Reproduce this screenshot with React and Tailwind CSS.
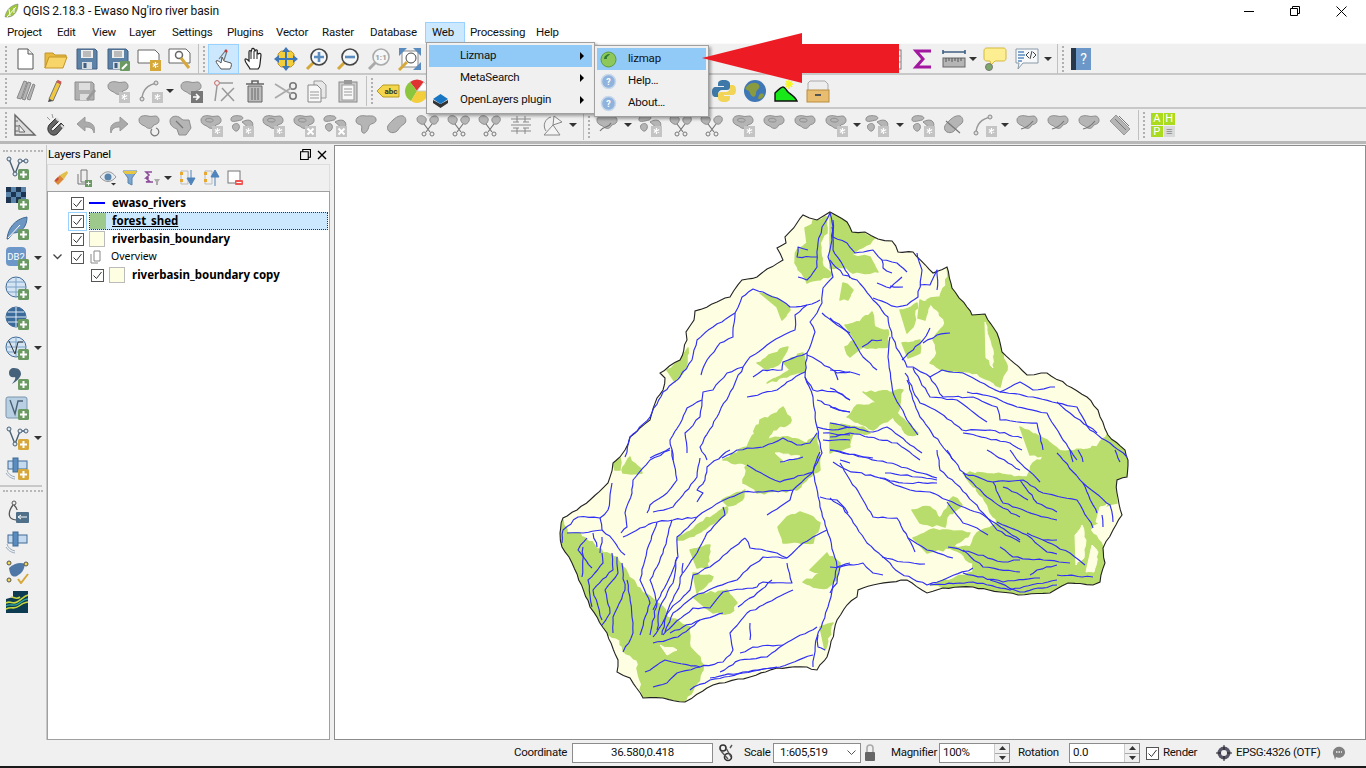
// deterministic wobble so the hand-read map lines don't look like straight segments
const wiggle = (pts, amp = 0.9, step = 5) => {
  const out = [];
  for (let i = 0; i < pts.length - 1; i++) {
    const [x1, y1] = pts[i];
    const [x2, y2] = pts[i + 1];
    const n = Math.max(1, Math.round(Math.hypot(x2 - x1, y2 - y1) / step));
    for (let k = 0; k < n; k++) {
      const t = k / n;
      const a = k === 0 ? 0 : Math.sin((x1 + k) * 12.9898 + (y2 + k) * 78.233) * 43758.5453;
      const b = k === 0 ? 0 : Math.sin((y1 + k) * 39.346 + (x2 - k) * 11.135) * 24634.6345;
      const ox = k === 0 ? 0 : ((a - Math.floor(a)) - 0.5) * 2 * amp;
      const oy = k === 0 ? 0 : ((b - Math.floor(b)) - 0.5) * 2 * amp;
      out.push(`${(x1 + (x2 - x1) * t + ox).toFixed(1)},${(y1 + (y2 - y1) * t + oy).toFixed(1)}`);
    }
  }
  out.push(pts[pts.length - 1].join(","));
  return out.join(" ");
};

const boundary = [[830,212],[847,222],[852,232],[865,232],[878,239],[892,241],[898,252],[913,252],[933,273],[947,267],[952,288],[967,307],[972,315],[985,314],[997,333],[1002,352],[1027,375],[1047,373],[1087,397],[1098,410],[1108,435],[1125,450],[1128,460],[1127,477],[1117,480],[1117,493],[1122,515],[1113,530],[1103,548],[1105,563],[1100,582],[1093,585],[1068,583],[1050,593],[1018,595],[1000,592],[973,587],[943,588],[927,593],[907,580],[873,585],[858,590],[857,597],[847,605],[837,620],[830,647],[827,657],[817,670],[807,667],[777,668],[750,677],[713,685],[685,702],[663,698],[643,698],[630,678],[617,672],[618,660],[607,633],[590,607],[572,563],[562,547],[560,533],[563,518],[577,510],[590,500],[608,483],[613,463],[620,457],[625,450],[630,437],[650,420],[657,398],[663,390],[665,378],[660,373],[680,360],[687,340],[686,332],[694,320],[695,311],[717,302],[725,298],[730,297],[742,280],[757,277],[767,269],[783,260],[777,248],[786,243],[785,237],[797,223],[803,215],[817,220]];

const greens = [
  [[805,228],[817,220],[828,217],[827,233],[820,243],[822,263],[832,275],[817,280],[807,283],[795,263],[797,250],[807,243]],
  [[830,210],[847,220],[852,231],[875,238],[850,257],[870,257],[878,272],[853,273],[847,268],[830,268]],
  [[843,283],[853,290],[848,300],[840,300]],
  [[947,265],[954,288],[969,307],[972,313],[985,312],[999,333],[1007,370],[1000,387],[977,373],[943,370],[930,363],[937,353],[933,340],[945,323],[937,310],[927,300],[940,297],[948,277]],
  [[845,325],[860,322],[872,312],[875,327],[888,330],[888,347],[863,347],[850,357],[845,347],[855,340]],
  [[900,310],[917,303],[913,327],[907,333]],
  [[920,300],[930,302],[925,320],[918,318]],
  [[902,343],[920,340],[920,353],[908,358]],
  [[863,392],[893,392],[903,390],[897,413],[918,433],[908,435],[893,417],[873,430],[847,417],[857,405],[877,403]],
  [[830,423],[863,427],[870,433],[853,433],[850,447],[830,453]],
  [[760,293],[780,300],[790,310],[782,320],[777,307]],
  [[667,370],[680,358],[688,348],[687,363],[683,373],[675,382]],
  [[757,363],[783,348],[788,347],[780,363],[767,370]],
  [[783,362],[803,353],[805,372],[783,377],[767,383],[790,370]],
  [[750,440],[760,420],[777,413],[783,407],[790,417],[790,423],[773,430],[767,440],[783,437],[807,443],[817,433],[820,470],[813,473],[797,490],[757,493],[743,483],[747,465],[723,460],[747,447]],
  [[787,517],[800,512],[813,517],[820,523],[813,543],[783,543],[778,527]],
  [[827,553],[840,563],[837,580],[827,588],[813,587],[803,582],[823,573],[810,570]],
  [[820,627],[833,623],[825,650]],
  [[690,550],[710,545],[708,567],[697,568]],
  [[693,573],[713,577],[697,593]],
  [[693,597],[727,590],[737,603],[730,613],[713,613],[700,603]],
  [[677,540],[700,523],[717,513],[727,507],[727,513],[703,530],[683,540]],
  [[722,500],[745,490],[742,500],[728,506]],
  [[563,520],[567,533],[580,533],[603,553],[617,557],[637,587],[663,607],[667,617],[690,627],[690,647],[700,657],[703,670],[697,683],[683,704],[663,700],[643,700],[640,680],[637,660],[623,650],[620,640],[605,635],[588,607],[570,567],[558,547]],
  [[622,470],[630,457],[642,473],[623,473]],
  [[613,463],[620,458],[620,470],[615,470]],
  [[963,473],[983,473],[1027,477],[1033,463],[1057,450],[1125,450],[1130,460],[1129,479],[1117,482],[1117,503],[1103,507],[1097,523],[1090,530],[1103,547],[1107,563],[1102,584],[1093,587],[1068,585],[1050,595],[1017,597],[1000,594],[973,589],[930,585],[940,582],[973,572],[973,563],[950,548],[970,547],[977,533],[997,523],[983,497],[970,483]],
  [[1020,427],[1047,440],[1063,453],[1097,447],[1108,433],[1127,450],[1130,460],[1057,460],[1030,455]],
  [[912,510],[930,507],[940,518],[953,497],[962,505],[947,517],[945,527],[920,523]],
  [[913,538],[930,530],[947,530],[970,533],[953,547],[927,553]],
];

const creamHoles = [
  [[985,322],[993,350],[993,368],[986,358]],
  [[1075,535],[1082,525],[1086,540],[1084,558],[1076,565]],
  [[1092,545],[1098,552],[1094,572],[1086,572]],
  [[1100,507],[1108,503],[1102,522],[1096,522]],
  [[775,453],[800,456],[785,462]],
  [[660,645],[677,650],[667,655]],
];

const rivers = [
  [[830,213],[833,227],[832,240],[828,257],[833,277],[823,288],[822,303],[817,313],[810,322],[815,332],[807,353],[805,377],[813,397],[817,427],[822,453],[813,472],[820,507],[827,530],[837,567],[828,607],[817,637],[813,667]],
  [[830,213],[822,227],[818,243],[817,267],[807,280],[798,277]],
  [[817,257],[797,257],[798,247],[808,250]],
  [[807,305],[790,307],[777,298],[763,292],[753,289],[742,297],[735,313],[713,327],[697,340],[692,360],[680,377],[663,392],[650,417],[630,437],[625,457]],
  [[735,313],[733,337],[720,343],[707,360],[701,375]],
  [[820,300],[807,305],[795,315],[795,330],[780,337],[767,345],[750,357],[743,367],[727,373],[713,390],[703,392],[702,400],[687,408],[682,420],[670,440],[673,460]],
  [[743,367],[735,383],[717,417],[700,447],[707,460]],
  [[702,400],[700,417],[685,433],[687,453]],
  [[807,353],[783,362],[782,370],[763,370],[753,377]],
  [[805,372],[787,382],[777,390],[747,397]],
  [[807,355],[817,360],[837,373],[850,372]],
  [[835,372],[838,380]],
  [[822,313],[837,325],[850,333]],
  [[805,377],[813,390],[837,392],[850,400]],
  [[817,400],[833,408],[850,412]],
  [[722,458],[737,450],[763,447],[783,438],[797,445],[810,443],[817,433]],
  [[650,458],[670,448]],
  [[817,427],[833,430],[850,427]],
  [[823,433],[850,435]],
  [[823,440],[850,440]],
  [[830,260],[843,275],[857,280],[873,300],[888,317],[892,337],[902,357]],
  [[833,220],[833,250],[850,278]],
  [[832,227],[833,237],[847,243],[855,253],[873,250],[882,260],[897,263],[907,272]],
  [[882,260],[883,268],[892,273]],
  [[917,253],[922,270],[918,297],[907,305],[897,307],[873,298]],
  [[920,285],[930,285],[937,270],[937,290]],
  [[902,277],[890,288],[877,283]],
  [[890,286],[903,287]],
  [[830,318],[843,328],[853,340],[863,357],[877,370]],
  [[862,347],[872,340],[882,340]],
  [[890,337],[888,357],[893,393],[907,420],[918,435]],
  [[902,357],[907,367],[913,367],[930,377],[942,370],[963,373],[980,382],[1000,392],[1020,382],[1033,390],[1055,387]],
  [[902,360],[923,340],[930,328]],
  [[923,343],[937,335],[950,333]],
  [[913,368],[930,397],[957,400],[987,422]],
  [[905,373],[920,403],[940,413],[962,430],[990,430],[1022,438]],
  [[930,377],[943,397],[973,397],[997,407],[1000,420],[1037,423],[1043,450]],
  [[907,380],[920,417],[940,443],[953,460]],
  [[967,392],[993,397],[1017,407],[1047,413],[1063,440],[1077,460]],
  [[1000,392],[1033,397],[1057,403],[1077,407],[1090,430],[1110,443],[1127,457]],
  [[963,433],[1010,443],[1022,450]],
  [[830,370],[850,372],[860,375]],
  [[830,388],[850,400]],
  [[830,407],[850,412]],
  [[830,423],[873,432],[887,427],[922,453]],
  [[830,437],[850,433],[897,443],[920,460]],
  [[830,450],[873,458]],
  [[1057,402],[1070,413],[1080,420],[1097,433]],
  [[830,450],[863,457],[897,465],[937,478]],
  [[833,462],[847,470],[880,478],[910,490],[930,492],[947,500],[970,510],[980,513],[1020,540]],
  [[880,478],[903,483],[937,483]],
  [[885,473],[917,477],[937,480]],
  [[840,463],[850,480],[863,500],[873,517],[897,518],[908,538],[927,550],[953,558]],
  [[830,498],[843,507],[867,543],[883,557],[900,573],[927,585],[943,580],[973,568]],
  [[882,557],[903,562],[925,564]],
  [[908,538],[915,552]],
  [[937,450],[940,470],[960,487],[983,513],[997,530],[1020,542]],
  [[947,450],[960,470],[973,483],[987,497],[1003,508],[1020,517]],
  [[963,473],[993,482],[1023,480],[1043,493],[1077,500],[1093,528]],
  [[993,482],[1003,503],[1037,515],[1057,520]],
  [[1003,487],[1017,493],[1028,500]],
  [[1020,480],[1037,503],[1057,512]],
  [[1057,453],[1083,483],[1097,513]],
  [[1083,483],[1110,505],[1113,522]],
  [[1102,515],[1103,527]],
  [[997,522],[1027,535],[1047,552],[1057,554]],
  [[1027,533],[1043,540],[1057,540]],
  [[1043,540],[1070,553],[1085,565]],
  [[1000,547],[1013,557],[1070,563]],
  [[947,502],[963,523],[977,528],[988,535]],
  [[948,547],[973,553],[1003,562],[1020,560]],
  [[963,550],[983,567],[1020,572]],
  [[963,573],[1003,582],[1040,578]],
  [[1057,565],[1037,570],[1030,575]],
  [[1057,575],[1093,577]],
  [[930,585],[973,582],[1010,590],[1057,580]],
  [[990,580],[1020,592],[1057,585]],
  [[1070,450],[1073,462]],
  [[1078,450],[1083,462]],
  [[1115,450],[1120,462]],
  [[987,450],[1020,470]],
  [[1010,450],[1017,460],[1040,482]],
  [[820,452],[813,472],[793,490],[763,492],[743,492],[720,502],[707,510],[697,517],[673,520],[657,522],[640,528],[623,537]],
  [[747,465],[770,478],[780,482],[813,472]],
  [[793,490],[790,500],[767,515]],
  [[803,457],[780,462]],
  [[730,450],[707,467],[705,480],[697,490],[703,493],[697,502]],
  [[700,458],[697,477],[673,507],[653,512]],
  [[672,450],[677,480],[667,493],[650,505],[647,513]],
  [[670,450],[650,460],[633,480],[632,493],[625,513],[627,527],[621,533]],
  [[612,483],[608,510],[600,518],[578,517],[563,530],[562,543]],
  [[600,518],[602,530],[583,533],[567,533]],
  [[602,530],[613,540],[625,555]],
  [[602,537],[600,553]],
  [[593,533],[597,547]],
  [[587,538],[578,550],[592,568]],
  [[583,547],[582,577]],
  [[602,553],[603,563],[588,580],[592,607]],
  [[612,553],[613,570],[593,590],[602,620]],
  [[617,557],[618,573],[605,590],[610,613],[602,625]],
  [[622,563],[625,590],[613,617],[613,633]],
  [[627,580],[632,617],[633,633],[623,652]],
  [[657,522],[647,550],[640,580],[650,603],[640,635]],
  [[672,520],[663,553],[650,580],[657,603],[650,635]],
  [[697,517],[677,537],[678,557],[667,583],[653,610]],
  [[677,557],[673,583],[660,607],[657,630]],
  [[683,563],[680,583],[667,613],[662,635]],
  [[723,507],[725,515],[707,533],[697,553],[683,573]],
  [[745,538],[727,553],[710,567],[693,575],[690,590],[670,610],[653,637]],
  [[745,538],[750,548],[777,553],[787,558]],
  [[787,558],[763,557],[747,570],[737,580],[713,588],[693,597],[673,613],[665,632]],
  [[787,563],[792,583],[763,582],[757,587],[723,592],[710,608],[693,608],[673,625],[663,635]],
  [[827,530],[803,543],[787,558]],
  [[772,580],[757,593],[738,607]],
  [[793,590],[763,605],[747,613],[730,633],[733,650],[723,662],[700,667],[677,663],[665,660],[645,672]],
  [[700,667],[677,673],[667,683],[653,687]],
  [[723,613],[700,620],[683,627],[670,633]],
  [[700,620],[690,628],[678,637],[653,643]],
  [[817,627],[783,645],[753,647],[740,653]],
  [[750,623],[750,640]],
  [[783,645],[767,657],[740,660],[720,672]],
  [[813,655],[780,667],[743,672],[710,678]],
  [[777,667],[743,673],[710,680],[690,690]],
  [[818,635],[818,647],[825,650]],
  [[837,567],[850,563]],
  [[820,497],[837,500],[848,513]],
  [[840,460],[850,463]],
  [[830,567],[840,567],[863,563],[873,573],[883,575]],
  [[840,567],[837,583],[830,593]],
];

const boundaryPts = wiggle(boundary, 0.8, 6);

const RiverMap = () => (
  <svg viewBox="335 146 1030 593" className="block w-full h-full">
    <defs>
      <clipPath id="basin">
        <polygon points={boundaryPts} />
      </clipPath>
    </defs>
    <polygon points={boundaryPts} fill="#fefee2" />
    <g clipPath="url(#basin)">
      {greens.map((g, i) => (
        <polygon key={i} points={wiggle(g, 1.4, 4)} fill="#b9dd6c" stroke="#b9dd6c" strokeWidth="1.5" strokeLinejoin="round" />
      ))}
      {creamHoles.map((g, i) => (
        <polygon key={i} points={wiggle(g, 1.2, 4)} fill="#fefee2" stroke="#fefee2" strokeLinejoin="round" />
      ))}
    </g>
    <polygon points={boundaryPts} fill="none" stroke="#222" strokeWidth="1.1" />
    {rivers.map((r, i) => (
      <polyline key={i} points={wiggle(r, 0.8, 5)} fill="none" stroke="#2f2ff5" strokeWidth="1.15" strokeLinejoin="round" />
    ))}
  </svg>
);

const Sv = ({ s = 24, children }) => (
  <svg width={s} height={s} viewBox="0 0 24 24" className="block">
    {children}
  </svg>
);

const Arrow = () => <span className="w-0 h-0 shrink-0 border-l-[4px] border-r-[4px] border-t-[4px] border-l-transparent border-r-transparent border-t-[#333]" />;

const Gap = ({ w }) => <div className={`${w} shrink-0`} />;

const Badge = ({ c = "#c4c4c4" }) => (
  <>
    <rect x="13" y="13" width="11" height="11" fill={c} />
    <path d="M18.5 15v6M15.8 16.500l5.400 3M21.200 16.500l-5.400 3" stroke="#fff" strokeWidth="1.2" />
  </>
);

const Plus = ({ c = "#6a9a62", x = 13, y = 13 }) => (
  <>
    <rect x={x} y={y} width="11" height="11" rx="1.5" fill={c} />
    <path d={`M${x + 5.5} ${y + 2}v7M${x + 2} ${y + 5.5}h7`} stroke="#fff" strokeWidth="2" />
  </>
);

const blobD = "M2 7c0-4 5-5 9-4 3 1 5 0 8 0 3 1 4 5 2 7-2 2-4 1-5 3-1 3-5 3-7 1-2-2-7-2-7-7z";

const Blob = ({ badge, d = blobD, lines }) => (
  <Sv>
    <path d={d} fill="#b5b5b5" stroke="#8e8e8e" />
    {lines && <path d={lines} fill="none" stroke="#777" strokeWidth="1.2" />}
    {badge === "gear" && <Badge />}
    {badge === "x" && (
      <>
        <rect x="13" y="13" width="11" height="11" fill="#c4c4c4" />
        <path d="M15.500 15.500l6 6M21.500 15.500l-6 6" stroke="#fff" strokeWidth="2" />
      </>
    )}
  </Sv>
);

const Scissor = () => (
  <Sv>
    <path d="M1 6c0-3 4-4 6-3s4 2 3 5c-1 3-3 4-5 3S1 9 1 6zM14 8c-1-3 2-5 5-5s4 3 3 5-3 4-5 3-2-1-3-3z" fill="#b5b5b5" stroke="#8e8e8e" />
    <path d="M8 11l6 8M16 11l-6 8" stroke="#777" strokeWidth="1.2" />
    <circle cx="8" cy="21" r="2" fill="none" stroke="#777" />
    <circle cx="16" cy="21" r="2" fill="none" stroke="#777" />
  </Sv>
);

const NewFile = () => (
  <Sv><path d="M5 2h10l5 5v15H5z" fill="#fff" stroke="#555" /><path d="M15 2v5h5" fill="#eee" stroke="#555" /></Sv>
);
const Folder = () => (
  <Sv><path d="M1 6h8l2 2h11v3H5L1 21z" fill="#e8b93f" stroke="#c4962a" /><path d="M5 10h18l-4 11H1z" fill="#f7d568" stroke="#c4962a" /></Sv>
);
const Floppy = ({ edit }) => (
  <Sv>
    <path d="M2 2h18l2 2v18H2z" fill="#5d82a8" stroke="#3f5f80" />
    <rect x="6" y="3" width="12" height="8" fill="#eee" />
    <path d="M8 5h8M8 7h8M8 9h8" stroke="#888" />
    <rect x="7" y="15" width="10" height="7" fill="#d8dde2" />
    <rect x="8.5" y="16" width="3" height="5" fill="#3f5f80" />
    {edit && <><rect x="14" y="14" width="10" height="10" rx="1" fill="#6a9a62" /><path d="M16 22l5-5" stroke="#fff" strokeWidth="2" /></>}
  </Sv>
);
const NewTpl = () => (
  <Sv>
    <path d="M1 3h17l4 4v9H1z" fill="#fff" stroke="#666" />
    <rect x="13" y="13" width="11" height="11" fill="#d6a83a" />
    <path d="M18.500 15v6M15.800 16.500l5.400 3M21.200 16.500l-5.400 3" stroke="#fff" strokeWidth="1.2" />
  </Sv>
);
const Manager = () => (
  <Sv>
    <path d="M1 2h17l4 4v10H1z" fill="#fff" stroke="#666" />
    <circle cx="11" cy="8" r="3.500" fill="none" stroke="#666" strokeWidth="1.5" />
    <path d="M13 11l8 10" stroke="#d6a83a" strokeWidth="3" />
  </Sv>
);
const Touch = () => (
  <Sv>
    <path d="M9 22c-2-3-5-6-5-8 1-1 3 0 5 2l1-6 2 4 7 2c1 2 0 4-1 6z" fill="#fff" stroke="#555" />
    <path d="M7 12l7-9M15 4l-3 9" stroke="#777" strokeWidth="1.2" />
    <circle cx="14" cy="4" r="1.400" fill="#c33" />
  </Sv>
);
const Hand = () => (
  <Sv>
    <path d="M7 22c-1-3-5-6-5-9 0-2 2-1 4 1V5c0-2 2-2 2 0l1-3c0-1 2-1 2 0l1 2c1-2 3-1 2 1l1 2c1-1 3-1 3 1l-1 9c0 2-1 4-2 5z" fill="#fff" stroke="#222" strokeWidth="1.2" />
    <path d="M8 5v7M11 4v8M14 6v6" stroke="#222" />
  </Sv>
);
const Pan = () => (
  <Sv>
    <path d="M4 7l3-3h10l3 3v10l-3 3H7l-3-3z" fill="#f2cd3c" stroke="#c4962a" />
    <path d="M12 0l4 5H8zM12 24l-4-5h8zM0 12l5-4v8zM24 12l-5 4V8z" fill="#3f76b5" />
    <path d="M12 5v14M5 12h14" stroke="#3f76b5" strokeWidth="2" />
  </Sv>
);
const Mag = ({ sym, grey }) => (
  <Sv>
    <path d="M2 22l7-7" stroke={grey ? "#aaa" : "#d6a83a"} strokeWidth="3" />
    <circle cx="14" cy="10" r="8" fill="#f4f6f8" stroke={grey ? "#aaa" : "#444"} strokeWidth="1.6" />
    {sym === "+" && <path d="M14 5v10M9 10h10" stroke="#5b8cc0" strokeWidth="2.6" />}
    {sym === "-" && <path d="M9 10h10" stroke="#5b8cc0" strokeWidth="2.6" />}
    {sym === "1" && <text x="14" y="13" textAnchor="middle" fontSize="8" fontWeight="700" fill="#999">1:1</text>}
  </Sv>
);
const ZoomFull = () => (
  <Sv>
    <rect x="4" y="4" width="16" height="16" fill="#fff" stroke="#888" />
    <path d="M1 1h8L1 9zM23 1h-8l8 8z" fill="#5b8cc0" />
    <path d="M23 23h-8l8-8z" fill="#5b8cc0" />
    <path d="M1 23l8-8" stroke="#d6a83a" strokeWidth="3" />
    <circle cx="13" cy="11" r="5" fill="#fff" stroke="#444" />
  </Sv>
);
const TableEnd = () => (
  <Sv><rect x="2" y="3" width="18" height="19" fill="#fff" stroke="#777" /><path d="M14 3v19M8 3v19M2 9h18M2 15h18" stroke="#999" /></Sv>
);
const Sigma = () => (
  <Sv><path d="M20 4H5l7 8-7 8h15" fill="none" stroke="#a2189f" strokeWidth="3" /></Sv>
);
const Ruler = () => (
  <Sv>
    <path d="M1 5h22M1 3v4M23 3v4" stroke="#3f5f80" strokeWidth="1.6" />
    <rect x="1" y="11" width="22" height="9" fill="#b5b5b5" stroke="#666" />
    <path d="M4 11v4M7 11v3M10 11v4M13 11v3M16 11v4M19 11v3" stroke="#555" />
  </Sv>
);
const Tip = () => (
  <Sv>
    <path d="M4 1h16c3 0 3 2 3 3v7c0 3-2 3-3 3H12l-4 4-1-4H4c-2 0-3-1-3-3V4c0-2 1-3 3-3z" fill="#fdee92" stroke="#d6b93a" />
    <circle cx="6" cy="20" r="3.500" fill="#7ba86a" stroke="#777" />
  </Sv>
);
const DocTip = () => (
  <Sv>
    <path d="M1 2h22v14H8l-5 6 1-6H1z" fill="#f6f8fa" stroke="#8a9aa8" />
    <path d="M3 5h6M3 8h7M3 11h6M3 14h4" stroke="#5b8cc0" strokeWidth="1.4" />
    <path d="M14 5l-3 3 3 3M18 5l3 3-3 3M17 4l-2 8" fill="none" stroke="#444" />
  </Sv>
);
const HelpBook = () => (
  <Sv>
    <rect x="2" y="1" width="20" height="22" fill="#6b98c8" />
    <rect x="2" y="1" width="5" height="22" fill="#26384a" />
    <text x="14.500" y="17" textAnchor="middle" fontSize="14" fill="#fff">?</text>
  </Sv>
);
const Pencils = () => (
  <Sv>
    <path d="M2 19L9 2l3 1-6 17zM7 20L13 3l3 1-6 17zM12 20l6-15 2 1-5 15z" fill="#b5b5b5" stroke="#888" />
  </Sv>
);
const Pencil = () => (
  <Sv>
    <path d="M5 20L13 2l4 2-8 18z" fill="#f0c840" stroke="#777" />
    <path d="M5 20l-1 3 5-1" fill="#444" />
    <path d="M13 2l4 2" stroke="#c55" strokeWidth="3" />
  </Sv>
);
const SaveEdit = () => (
  <Sv>
    <path d="M2 3h17l2 2v16H2z" fill="#b0b0b0" stroke="#8e8e8e" />
    <rect x="6" y="4" width="11" height="7" fill="#ddd" />
    <rect x="7" y="15" width="9" height="6" fill="#ddd" />
    <path d="M13 20l8-10 2 2-8 10z" fill="#9a9a9a" />
  </Sv>
);
const Nodes = ({ badge }) => (
  <Sv>
    <path d="M3 21c0-8 4-15 15-17" fill="none" stroke="#999" strokeWidth="1.4" />
    <circle cx="3" cy="20" r="2" fill="#ddd" stroke="#888" />
    <circle cx="17" cy="4" r="2" fill="#ddd" stroke="#888" />
    {badge && <Badge />}
  </Sv>
);
const BlobArrow = () => (
  <Sv>
    <path d={blobD} fill="#b5b5b5" stroke="#8e8e8e" />
    <rect x="12" y="12" width="12" height="12" fill="#777" />
    <path d="M14 18h5M17 15l3 3-3 3" stroke="#fff" strokeWidth="1.6" fill="none" />
  </Sv>
);
const Tools = () => (
  <Sv>
    <circle cx="5" cy="4" r="2.400" fill="none" stroke="#b66" />
    <path d="M7 4h14M5 7L3 22M22 9L9 22M10 9l12 13" stroke="#999" strokeWidth="1.5" />
  </Sv>
);
const Trash = () => (
  <Sv>
    <path d="M3 5h18M9 5V2h6v3" stroke="#666" strokeWidth="1.6" fill="none" />
    <path d="M5 7h14v16H5z" fill="#bbb" stroke="#666" />
    <path d="M9 9v12M12 9v12M15 9v12" stroke="#666" />
  </Sv>
);
const Cut = () => (
  <Sv>
    <circle cx="19" cy="7" r="3.200" fill="none" stroke="#777" strokeWidth="1.6" />
    <circle cx="19" cy="17" r="3.200" fill="none" stroke="#777" strokeWidth="1.6" />
    <path d="M1 5l16 10M1 19l16-10" stroke="#aaa" strokeWidth="1.8" />
  </Sv>
);
const Copy = () => (
  <Sv>
    <path d="M9 2h8l4 4v13H9z" fill="#e8e8e8" stroke="#999" />
    <path d="M3 6h9l4 4v13H3z" fill="#f8f8f8" stroke="#888" />
    <path d="M5 13h9M5 16h9M5 19h9" stroke="#999" />
  </Sv>
);
const Paste = () => (
  <Sv>
    <rect x="3" y="3" width="18" height="20" fill="#ccc" stroke="#888" />
    <rect x="6" y="6" width="12" height="15" fill="#f8f8f8" stroke="#999" />
    <rect x="8" y="1" width="8" height="4" fill="#999" />
    <path d="M8 10h8M8 13h8M8 16h8" stroke="#999" />
  </Sv>
);
const Abc = () => (
  <Sv>
    <path d="M7 6h16v12H7l-6-6z" fill="#f3d64b" stroke="#b79a20" />
    <text x="15" y="15" textAnchor="middle" fontSize="8" fontWeight="700" fill="#333">abc</text>
  </Sv>
);
const Pie = () => (
  <Sv>
    <path d="M12 12L5 3a11 11 0 0 1 14 0z" fill="#e03232" />
    <path d="M12 12L5 3a11 11 0 0 0 1 19z" fill="#8cc63e" />
    <path d="M12 12l-6 10a11 11 0 0 0 17-10z" fill="#f2cd3c" />
    <path d="M12 12l7-9a11 11 0 0 1 4 9z" fill="#fff" stroke="#ccc" />
  </Sv>
);
const Python = () => (
  <Sv>
    <path d="M12 1c-5 0-6 2-6 4v2h6v1H4c-3 0-4 2-4 5s1 5 4 5h2v-3c0-2 2-4 4-4h5c2 0 3-1 3-3V5c0-2-2-4-6-4z" fill="#3d78a8" />
    <path d="M12 23c5 0 6-2 6-4v-2h-6v-1h8c3 0 4-2 4-5s-1-5-4-5h-2v3c0 2-2 4-4 4H9c-2 0-3 1-3 3v3c0 2 2 4 6 4z" fill="#f2d557" />
  </Sv>
);
const Globe = () => (
  <Sv>
    <circle cx="12" cy="12" r="11" fill="#3f76b5" />
    <path d="M5 6c4-3 9-3 11 0 2 4-3 4-3 8s-3 5-5 2-1-4-4-5-1-3 1-5zM17 15c2-1 4 0 4 1-1 3-3 4-5 4s0-4 1-5z" fill="#8a9a3e" />
  </Sv>
);
const GreenHill = () => (
  <Sv>
    <path d="M1 22V14c3-3 6-6 8-6s3 3 5 5 7 4 9 9z" fill="#18e818" stroke="#111" strokeWidth="1.4" />
    <path d="M15 1v9M11 5l8 0M12 2l6 6M18 2l-6 6" stroke="#f5f520" strokeWidth="1.6" />
  </Sv>
);
const Archive = () => (
  <Sv>
    <path d="M4 2h15l3 3v7H2V4z" fill="#eee" stroke="#aaa" />
    <rect x="1" y="11" width="22" height="12" fill="#e8bd70" stroke="#b98d3e" />
    <rect x="9" y="15" width="6" height="2" fill="#555" />
  </Sv>
);
const SetSquare = () => (
  <Sv>
    <path d="M2 2l20 20H2z" fill="#ddd" stroke="#666" strokeWidth="1.4" />
    <path d="M6 12l6 7H6z" fill="#f0f0f0" stroke="#666" />
    <path d="M2 8h3M2 13h3M2 18h3" stroke="#666" />
  </Sv>
);
const Magnet = () => (
  <Sv>
    <path d="M5 12l7-7 3 3-7 7c-2 2 0 4 2 2l7-7 3 3-7 8c-5 4-12-3-8-9z" fill="#666" stroke="#333" />
    <path d="M12 5l3 3M17 12l3 3" stroke="#ddd" strokeWidth="2" />
    <path d="M3 4l3 3M8 1l1 4" stroke="#999" />
  </Sv>
);
const Undo = ({ flip }) => (
  <Sv>
    <g transform={flip ? "matrix(-1 0 0 1 24 0)" : undefined}>
      <path d="M10 4L2 11l8 7v-4c5 0 8 1 9 6 2-7-2-11-9-11z" fill="#aaa" stroke="#999" />
    </g>
  </Sv>
);
const Ahp = () => (
  <div className="grid grid-cols-2 grid-rows-2 w-[24px] h-[24px] gap-px text-[11px] leading-[12px] text-white text-center">
    <span className="bg-[#aadb1e]">A</span>
    <span className="bg-[#aadb1e]">H</span>
    <span className="bg-[#aadb1e]">P</span>
    <span className="bg-[#d9d9d9] text-[#888]">≡</span>
  </div>
);

const Cell = ({ children, w = "w-[31px]" }) => <div className={`${w} h-[30px] flex items-center justify-center shrink-0`}>{children}</div>;

const Grip = () => (
  <div className="w-[4px] h-[26px] ml-[1px] shrink-0 border-l-2 border-dotted border-[#b0b0b0]" />
);

const Sep = () => <div className="w-px h-[30px] mx-[3px] bg-[#c0c0c0] shrink-0" />;

const menus = [
  ["Project", "w-[50px]"], ["Edit", "w-[35px]"], ["View", "w-[37px]"], ["Layer", "w-[43px]"], ["Settings", "w-[55px]"], ["Plugins", "w-[49px]"],
  ["Vector", "w-[46px]"], ["Raster", "w-[48px]"], ["Database", "w-[55px]"],
];

const Title = () => (
  <div className="h-[22px] bg-white flex items-center">
    <svg width="16" height="16" viewBox="0 0 16 16" className="ml-[4px] mr-[3px]">
      <path d="M1 14C2 7 7 2 14 1c0 6-3 12-9 13z" fill="#9dc53e" stroke="#777" strokeWidth=".5" />
      <path d="M3 14L12 4M6 13l-1-7M10 10l0-5" stroke="#fff" />
    </svg>
    <span className="text-[12px] tracking-[-0.1px] text-[#111]">QGIS 2.18.3 - Ewaso Ng'iro river basin</span>
    <div className="ml-auto flex mr-[2px]">
      <div className="w-[46px] h-[22px] flex items-center justify-center"><div className="w-[10px] h-px bg-black" /></div>
      <div className="w-[46px] h-[22px] flex items-center justify-center">
        <svg width="10" height="10" viewBox="0 0 10 10"><path d="M.5 2.500h7v7h-7zM2.500 2.500v-2h7v7h-2" fill="none" stroke="#000" /></svg>
      </div>
      <div className="w-[46px] h-[22px] flex items-center justify-center">
        <svg width="11" height="11" viewBox="0 0 11 11"><path d="M.5.5l10 10M10.500.5l-10 10" stroke="#000" /></svg>
      </div>
    </div>
  </div>
);

const MenuBar = () => (
  <div className="h-[21px] bg-white flex items-center pl-[7px] text-[11.5px] tracking-[-0.2px] text-[#111]">
    {menus.map(([m, w]) => <span key={m} className={w}>{m}</span>)}
    <span className="w-[40px] h-[21px] pl-[6px] flex items-center bg-[#cce8ff] border border-[#99d1ff] mr-[5px]">Web</span>
    <span className="w-[66px]">Processing</span>
    <span>Help</span>
  </div>
);

const row1a = [NewFile, Folder, () => <Floppy />, () => <Floppy edit />, NewTpl, Manager];
const row1b = [Hand, Pan, () => <Mag sym="+" />, () => <Mag sym="-" />, () => <Mag sym="1" grey />, ZoomFull];

const Row1 = () => (
  <div className="h-[32px] flex items-center pl-[4px] border-b-2 border-[#c8c8c8] border-t border-t-[#fafafa]">
    <Grip />
    {row1a.map((I, i) => <Cell key={i}><I /></Cell>)}
    <Sep />
    <Grip />
    <Gap w="w-px" />
    <div className="w-[31px] h-[30px] bg-[#cce8ff] border border-[#99d1ff] flex items-center justify-center shrink-0"><Touch /></div>
    {row1b.map((I, i) => <Cell key={i}><I /></Cell>)}
    <Gap w="w-[453px]" />
    <Cell w="w-[29px]"><TableEnd /></Cell>
    <Cell><Sigma /></Cell>
    <Cell><Ruler /></Cell>
    <Arrow />
    <Gap w="w-[3px]" />
    <Cell w="w-[30px]"><Tip /></Cell>
    <Gap w="w-px" />
    <Cell><DocTip /></Cell>
    <Gap w="w-[2px]" />
    <Arrow />
    <Gap w="w-[2px]" />
    <Sep />
    <Grip />
    <Gap w="w-[3px]" />
    <Cell w="w-[24px]"><HelpBook /></Cell>
  </div>
);

const Row2 = () => (
  <div className="h-[34px] flex items-center pl-[4px] border-b-2 border-[#c8c8c8]">
    <Grip />
    <Gap w="w-[2px]" />
    <Cell><Pencils /></Cell>
    <Cell w="w-[27px]"><Pencil /></Cell>
    <Cell><SaveEdit /></Cell>
    <Cell w="w-[36px]"><Blob badge="gear" /></Cell>
    <Cell w="w-[30px]"><Nodes badge /></Cell>
    <div className="w-[10px] flex shrink-0"><Arrow /></div>
    <Cell w="w-[30px]"><BlobArrow /></Cell>
    <Gap w="w-[2px]" />
    <Cell><Tools /></Cell>
    <Cell><Trash /></Cell>
    <Cell><Cut /></Cell>
    <Cell><Copy /></Cell>
    <Cell><Paste /></Cell>
    <Sep />
    <Grip />
    <Cell w="w-[26px]"><Abc /></Cell>
    <Cell><Pie /></Cell>
    <Gap w="w-[276px]" />
    <Cell><Python /></Cell>
    <Cell><Globe /></Cell>
    <Cell w="w-[32px]"><GreenHill /></Cell>
    <Cell><Archive /></Cell>
  </div>
);

const hole = "M2 7c0-4 5-5 9-4 3 1 5 0 8 0 3 1 4 5 2 7-2 2-4 1-5 3-1 3-5 3-7 1-2-2-7-2-7-7zM7 6c2-1 4-1 6 0s1 3-1 3-7 0-5-3z";
const split = "M1 6c0-3 5-4 9-3 3 0 4 3 1 4-4 1-11 3-10-1zM3 12c2-2 5-2 6 0s0 5-2 6-6-3-4-6zM12 9c3-2 8-3 10 0s0 6-2 6-3-2-8-6z";
const kidney = "M2 8c0-5 6-6 10-5 4 0 9-1 10 3 1 5-6 4-7 7-1 5-4 8-6 7-3-2 0-6-2-8-2-1-5-1-5-4z";
const bean = "M3 17c-2-4 2-7 5-10s7-5 10-4 4 6 1 8-4 3-6 6-8 4-10 0z";
const netD = "M2 6h20M2 12h20M2 18h20M8 3v6M16 3v6M8 15v6M16 15v6M4 9h6M14 9h6M4 15h6M14 15h6";
const curve = "M6 16c5-1 8-3 12-8";

const Row3 = () => (
  <div className="h-[35px] flex items-center pl-[4px] border-b-[3px] border-[#b8b8b8]">
    <Grip />
    <Cell><SetSquare /></Cell>
    <Cell><Magnet /></Cell>
    <Cell><Undo /></Cell>
    <Cell><Undo flip /></Cell>
    <Cell><Blob lines="M15 16a4 4 0 1 0 4 -1" /></Cell>
    <Cell><Blob d="M2 8c0-4 5-6 9-4l4 3 6 0 2 8-5 7h-7l-2-6c-3-1-7-3-7-8z" lines="M8 8l7 7" /></Cell>
    <Cell><Blob d={hole} badge="gear" /></Cell>
    <Cell><Blob d={split} badge="gear" /></Cell>
    <Cell><Blob d={hole} badge="gear" /></Cell>
    <Cell><Blob d={hole} badge="x" /></Cell>
    <Cell><Blob d={split} badge="x" /></Cell>
    <Cell><Blob d={kidney} /></Cell>
    <Cell><Blob d={bean} /></Cell>
    <Cell><Scissor /></Cell>
    <Cell><Scissor /></Cell>
    <Cell><Scissor /></Cell>
    <Cell><Sv><path d={netD} fill="none" stroke="#888" /></Sv></Cell>
    <Cell><Sv><path d="M14 3L22 9 13 12zM13 12L4 22h16z" fill="#f4f4f4" stroke="#888" /><path d="M11 4a9 9 0 0 0-5 14" fill="none" stroke="#888" /></Sv></Cell>
    <Gap w="w-[2px]" />
    <Arrow />
    <Gap w="w-[3px]" />
    <Sep />
    <Grip />
    <Cell w="w-[30px]"><Blob lines="M5 18c4-6 8-2 11-8" /></Cell>
    <Gap w="w-[2px]" />
    <Arrow />
    <Gap w="w-[2px]" />
    <Cell><Blob d={split} badge="gear" /></Cell>
    <Cell><Scissor /></Cell>
    <Cell><Scissor /></Cell>
    <Cell><Blob d={hole} badge="gear" /></Cell>
    <Cell><Blob d={hole} /></Cell>
    <Cell><Blob d={hole} /></Cell>
    <Cell><Blob d={hole} badge="gear" /></Cell>
    <Gap w="w-[2px]" />
    <Arrow />
    <Cell><Blob d={split} badge="gear" /></Cell>
    <Gap w="w-[4px]" />
    <Arrow />
    <Gap w="w-[3px]" />
    <Cell><Blob d={split} badge="gear" /></Cell>
    <Cell><Blob d={bean} lines="M4 8l14 12" /></Cell>
    <Cell><Nodes badge /></Cell>
    <Gap w="w-px" />
    <Arrow />
    <Gap w="w-[2px]" />
    <Cell><Blob lines={curve} /></Cell>
    <Cell><Blob lines={curve} /></Cell>
    <Cell><Blob lines={curve} /></Cell>
    <Cell><Sv><path d="M8 2l14 14-6 6L2 8z" fill="#b5b5b5" stroke="#999" /><path d="M7 6l11 11M11 3l10 10" stroke="#777" /></Sv></Cell>
    <Sep />
    <Grip />
    <Gap w="w-[2px]" />
    <Cell w="w-[28px]"><Ahp /></Cell>
  </div>
);

const LeftIcon = ({ children, arrow }) => (
  <div className="h-[30px] flex items-center">
    <div className="w-[34px] flex justify-center">{children}</div>
    {arrow && <Arrow />}
  </div>
);

const Vert = ({ children }) => (
  <Sv>
    <path d="M4 3l6 15 5-13h6" fill="none" stroke="#4a6075" strokeWidth="1.4" />
    <circle cx="4" cy="3" r="2" fill="#dfe8f0" stroke="#4a6075" />
    <circle cx="10" cy="18" r="2" fill="#dfe8f0" stroke="#4a6075" />
    <circle cx="15" cy="5" r="2" fill="#dfe8f0" stroke="#4a6075" />
    <circle cx="21" cy="5" r="2" fill="#dfe8f0" stroke="#4a6075" />
    {children}
  </Sv>
);

const BlueGlobe = ({ grid, children }) => (
  <Sv>
    <circle cx="11" cy="11" r="10" fill={grid ? "#d5e4f2" : "#3a6a9a"} stroke="#3f6a96" />
    <path d="M1 11h20M11 1v20M3 6h16M3 16h16" stroke={grid ? "#7ca3c8" : "#dfeaf5"} />
    {children}
  </Sv>
);

const Beam = ({ children }) => (
  <Sv>
    <rect x="3" y="5" width="19" height="8" fill="#c5daee" stroke="#3f6a96" />
    <rect x="8" y="2" width="5" height="14" fill="#5b8cc0" stroke="#3f6a96" />
    <path d="M2 14c1 4 4 6 8 7M1 17c2 3 4 5 9 6" fill="none" stroke="#9ab" />
    {children}
  </Sv>
);

const LeftBar = () => (
  <div className="w-[46px] shrink-0 flex flex-col">
    <div className="h-[3px] mx-[3px] mt-[5px] border-t-2 border-dotted border-[#b8b8b8]" />
    <div>
      <LeftIcon><Vert><Plus /></Vert></LeftIcon>
      <LeftIcon>
        <Sv>
          <rect x="1" y="1" width="20" height="16" fill="#5b84ab" />
          <path d="M1 1h5v5H1zM11 1h5v5h-5zM6 6h5v5H6zM16 6h5v5h-5zM1 11h5v6H1zM11 11h5v6h-5z" fill="#1d3550" />
          <Plus />
        </Sv>
      </LeftIcon>
      <LeftIcon>
        <Sv>
          <path d="M2 23C3 12 10 3 22 1c0 9-5 16-14 16l-5 6z" fill="#6d97c2" stroke="#3f6a96" />
          <path d="M3 22L15 9" stroke="#fff" />
          <Plus />
        </Sv>
      </LeftIcon>
      <LeftIcon arrow>
        <Sv>
          <rect x="1" y="1" width="20" height="19" rx="4" fill="#6d97c8" />
          <text x="11" y="14" textAnchor="middle" fontSize="9.500" fill="#fff">DB2</text>
          <Plus />
        </Sv>
      </LeftIcon>
      <LeftIcon arrow><BlueGlobe grid><Plus /></BlueGlobe></LeftIcon>
      <LeftIcon><BlueGlobe><Plus /></BlueGlobe></LeftIcon>
      <LeftIcon arrow><BlueGlobe grid><path d="M4 5l6 13 3-12h5" fill="none" stroke="#333" /><Plus /></BlueGlobe></LeftIcon>
      <LeftIcon>
        <Sv>
          <path d="M9 2c5 0 7 3 7 6s-5 8-9 10c2-3 4-5 3-7-4 1-6-1-6-4s2-5 5-5z" fill="#46617a" />
          <Plus />
        </Sv>
      </LeftIcon>
      <LeftIcon>
        <Sv>
          <rect x="1" y="1" width="21" height="21" rx="2" fill="#b9cfe2" stroke="#7b96ae" />
          <path d="M5 4l5 14 3-13h5" fill="none" stroke="#4a6075" strokeWidth="1.4" />
          <Plus />
        </Sv>
      </LeftIcon>
      <LeftIcon arrow><Vert><Plus c="#d6a83a" /></Vert></LeftIcon>
      <LeftIcon><Beam><Plus c="#d6a83a" /></Beam></LeftIcon>
    </div>
    <div className="mt-[2px] mr-[4px] border-t-2 border-[#c8c8c8]" />
    <div className="h-[3px] mx-[3px] mt-[3px] border-t-2 border-dotted border-[#b8b8b8]" />
    <div className="mt-[4px]">
      <LeftIcon>
        <Sv>
          <circle cx="9" cy="3" r="2" fill="none" stroke="#555" />
          <path d="M8 5c-3 4-5 8-3 12 2 3 5 3 7 3M9 5c2 2 3 3 3 5" fill="none" stroke="#555" strokeWidth="1.3" />
          <rect x="11" y="12" width="13" height="11" rx="1" fill="#4f7088" />
          <path d="M14 17h8M16 15l-3 2 3 2" stroke="#fff" fill="none" />
        </Sv>
      </LeftIcon>
      <LeftIcon><Beam /></LeftIcon>
      <LeftIcon>
        <Sv>
          <path d="M4 8c5-5 12-6 16-4-1 6-3 9-8 12-2 1-7 2-8-8z" fill="#4f78a6" />
          <circle cx="4" cy="3" r="2" fill="#f0d850" stroke="#555" />
          <circle cx="21" cy="4" r="2" fill="#f0d850" stroke="#555" />
          <circle cx="4" cy="20" r="2" fill="#f0d850" stroke="#555" />
          <path d="M13 19l3 4 7-9" fill="none" stroke="#d6a83a" strokeWidth="2" />
        </Sv>
      </LeftIcon>
      <LeftIcon>
        <Sv>
          <path d="M8 1h15v22H1V9l7-2z" fill="#0d3b52" />
          <path d="M1 13c5-3 6 2 11-1s7-6 11-7M1 19c6-3 8 1 13-3s5-3 9-4M6 7c4 0 5 3 9 0" fill="none" stroke="#c8d83a" strokeWidth="1.6" />
          <path d="M1 16c5-3 7 1 12-2s6-5 10-5" fill="none" stroke="#2fa6a0" strokeWidth="1.4" />
        </Sv>
      </LeftIcon>
    </div>
  </div>
);

const Check = ({ hl }) => (
  <span className={`w-[13px] h-[13px] border flex items-center justify-center bg-white shrink-0 ${hl ? "border-[#555] outline outline-[#99d1ff] outline-offset-[2px]" : "border-[#555]"}`}>
    <svg width="11" height="11" viewBox="0 0 11 11"><path d="M1.500 5.500l3 3 5-6.500" fill="none" stroke="#333" /></svg>
  </span>
);

const Swatch = ({ c }) => <span className={`w-[16px] h-[16px] border border-[#bbb] shrink-0 ${c}`} />;

const Tree = () => (
  <div className="flex-1 bg-white border border-[#a0a0a0] pt-[2px] text-[11.5px] text-black font-['Noto_Sans',sans-serif]">
    <div className="h-[18px] flex items-center pl-[23px] gap-[5px] font-bold">
      <Check />
      <span className="w-[16px] h-[2px] bg-[#0000ff] shrink-0" />
      <span className="ml-[2px]">ewaso_rivers</span>
    </div>
    <div className="h-[18px] flex items-center pl-[23px] gap-[5px] font-bold">
      <Check hl />
      <div className="flex-1 flex items-center h-[18px] bg-[#cce8ff] border border-dotted border-[#333] mr-px">
        <span className="w-[16px] h-[16px] bg-[#9dca8c] shrink-0" />
        <span className="ml-[6px] underline">forest_shed</span>
      </div>
    </div>
    <div className="h-[18px] flex items-center pl-[23px] gap-[5px] font-bold">
      <Check />
      <Swatch c="bg-[#fefee2]" />
      <span className="ml-[2px]">riverbasin_boundary</span>
    </div>
    <div className="h-[18px] flex items-center pl-[5px] gap-[5px]">
      <svg width="9" height="6" viewBox="0 0 9 6" className="mr-[4px]"><path d="M.5.5l4 4 4-4" fill="none" stroke="#444" strokeWidth="1.3" /></svg>
      <Check />
      <svg width="16" height="16" viewBox="0 0 16 16"><path d="M5 2h6v10H5zM2 5v9h7" fill="#fff" stroke="#888" /></svg>
      <span className="ml-px text-[10.5px]">Overview</span>
    </div>
    <div className="h-[18px] flex items-center pl-[43px] gap-[5px] font-bold">
      <Check />
      <Swatch c="bg-[#fefee2]" />
      <span className="ml-[2px]">riverbasin_boundary copy</span>
    </div>
  </div>
);

const Panel = () => (
  <div className="w-[284px] shrink-0 flex flex-col mr-[4px] border-l border-[#c8c8c8]">
    <div className="h-[19px] flex items-center text-[11.5px] tracking-[-0.2px] pl-px pr-[3px]">
      <span>Layers Panel</span>
      <svg width="11" height="11" viewBox="0 0 10 10" className="ml-auto"><path d="M.5 2.500h7v7h-7zM2.500 2.500v-2h7v7h-2" fill="none" stroke="#000" /></svg>
      <svg width="10" height="10" viewBox="0 0 10 10" className="ml-[6px]"><path d="M1 1l8 8M9 1l-8 8" stroke="#000" strokeWidth="1.4" /></svg>
    </div>
    <div className="h-[27px] flex items-center pl-px border-t border-[#ddd] border-x border-x-[#ddd]">
      <div className="w-[23px] flex justify-center"><svg width="16" height="16" viewBox="0 0 16 16"><path d="M1 11l6-6 4 4-6 6z" fill="#d98b3a" /><path d="M7 5l7-4 1 2-4 6z" fill="#e3c04a" /><path d="M2 10l3-3 1 2-3 3z" fill="#c44" /></svg></div>
      <div className="w-[24px] flex justify-center"><svg width="18" height="18" viewBox="0 0 18 18"><path d="M6 1h6v12H6zM3 5v10h7" fill="#eee" stroke="#777" /><rect x="10" y="11" width="7" height="7" fill="#6a9a62" /><path d="M13.500 12.500v4M11.500 14.500h4" stroke="#fff" /></svg></div>
      <div className="w-[24px] flex justify-center"><svg width="18" height="16" viewBox="0 0 18 16"><path d="M1 7c5-7 11-7 16 0-5 6-11 6-16 0z" fill="#e6ecf2" stroke="#999" /><circle cx="9" cy="7" r="3.500" fill="#5b84ab" /><path d="M12 13h5l-2.500 2.500z" fill="#333" /></svg></div>
      <div className="w-[20px] flex justify-center"><svg width="16" height="16" viewBox="0 0 16 16"><path d="M1 1h14L10 8v7l-4-2V8z" fill="#7ba7d0" stroke="#5b84ab" /><path d="M1 1h14l-2 3H3z" fill="#e8c840" /></svg></div>
      <div className="w-[24px] flex justify-center"><svg width="18" height="16" viewBox="0 0 18 16"><path d="M9 2H3l3 3-3 3h3M3 8l3 3-3 1h7" fill="none" stroke="#8c4a9a" strokeWidth="1.6" /><path d="M11 9h6l-2 3v3h-2v-3z" fill="#aaa" /></svg></div>
      <Arrow />
      <Gap w="w-[5px]" />
      <div className="w-[24px] flex justify-center"><svg width="18" height="18" viewBox="0 0 18 18"><path d="M1 2h7v13H1z" fill="none" stroke="#bbb" /><rect x="0" y="3" width="3" height="3" fill="#e8a830" /><rect x="0" y="10" width="3" height="3" fill="#e8a830" /><path d="M11 1v11M7 9h8l-4 7z" fill="#4f84bd" stroke="#4f84bd" /></svg></div>
      <div className="w-[23px] flex justify-center"><svg width="18" height="18" viewBox="0 0 18 18"><path d="M1 2h7v13H1z" fill="none" stroke="#bbb" /><rect x="0" y="3" width="3" height="3" fill="#e8a830" /><rect x="0" y="10" width="3" height="3" fill="#e8a830" /><path d="M11 17V6M7 8h8l-4-7z" fill="#4f84bd" stroke="#4f84bd" /></svg></div>
      <div className="w-[22px] flex justify-center"><svg width="16" height="16" viewBox="0 0 16 16"><rect x="1" y="1" width="12" height="12" fill="#fff" stroke="#777" /><rect x="8" y="10" width="8" height="5" rx="1" fill="#e55" /><path d="M9.500 12.500h5" stroke="#fff" /></svg></div>
    </div>
    <Tree />
  </div>
);

const SpinBtns = () => (
  <div className="w-[15px] h-full flex flex-col border-l border-[#ccc] bg-[#f0f0f0] shrink-0">
    <div className="flex-1 flex items-center justify-center border-b border-[#aaa]"><svg width="7" height="4" viewBox="0 0 7 4"><path d="M3.500 0L7 4H0z" fill="#333" /></svg></div>
    <div className="flex-1 flex items-center justify-center"><svg width="7" height="4" viewBox="0 0 7 4"><path d="M3.500 4L7 0H0z" fill="#333" /></svg></div>
  </div>
);

const StatusBar = () => (
  <div className="h-[26px] flex items-center text-[11.5px] tracking-[-0.3px] text-[#111] pl-[514px] shrink-0">
    <span className="w-[58px]">Coordinate</span>
    <div className="w-[141px] h-[20px] bg-white border border-[#8c8c8c] flex items-center justify-center">36.580,0.418</div>
    <div className="w-[25px] flex justify-center">
      <svg width="16" height="18" viewBox="0 0 16 18"><circle cx="5" cy="4" r="3" fill="none" stroke="#333" strokeWidth="1.6" /><circle cx="10" cy="13" r="3.500" fill="none" stroke="#333" strokeWidth="1.6" /><path d="M3 7l7 8M8 4l5 9M14 1l-2 3" stroke="#555" strokeWidth="1.4" /></svg>
    </div>
    <span className="ml-[6px] w-[29px]">Scale</span>
    <div className="w-[88px] h-[20px] bg-white border border-[#8c8c8c] flex items-center pl-[6px]">
      <span>1:605,519</span>
      <svg width="9" height="6" viewBox="0 0 9 6" className="ml-auto mr-[4px]"><path d="M.5.5l4 4 4-4" fill="none" stroke="#555" /></svg>
    </div>
    <div className="w-[18px] flex justify-center">
      <svg width="12" height="18" viewBox="0 0 12 18"><path d="M3 8V4a3 3 0 0 1 6 0v4" fill="none" stroke="#aaa" strokeWidth="1.6" /><rect x="1" y="8" width="10" height="9" rx="1" fill="#666" /></svg>
    </div>
    <span className="ml-[12px] w-[48px]">Magnifier</span>
    <div className="w-[71px] h-[20px] bg-white border border-[#8c8c8c] flex items-center pl-[3px]">
      <span className="flex-1">100%</span>
      <SpinBtns />
    </div>
    <span className="ml-[8px] w-[51px]">Rotation</span>
    <div className="w-[71px] h-[20px] bg-white border border-[#8c8c8c] flex items-center pl-[3px]">
      <span className="flex-1">0.0</span>
      <SpinBtns />
    </div>
    <span className="ml-[6px] w-[13px] h-[13px] bg-white border border-[#555] flex items-center justify-center">
      <svg width="11" height="11" viewBox="0 0 11 11"><path d="M1.500 5.500l3 3 5-6.500" fill="none" stroke="#333" /></svg>
    </span>
    <span className="ml-[4px] w-[53px]">Render</span>
    <svg width="16" height="16" viewBox="0 0 16 16"><circle cx="8" cy="8" r="6.500" fill="#556" /><path d="M8 0v16M0 8h16" stroke="#222" /><circle cx="8" cy="8" r="3" fill="#eee" /></svg>
    <span className="ml-[4px] w-[95px] whitespace-nowrap">EPSG:4326 (OTF)</span>
    <svg width="16" height="16" viewBox="0 0 16 16"><path d="M2 7a6 5.500 0 1 1 3 5l-1 3 -1-4a5 5 0 0 1-1-4z" fill="#808080" /><path d="M5 7h6" stroke="#eee" strokeDasharray="1.500 1" strokeWidth="1.500" /></svg>
  </div>
);

const MenuArrow = () => <span className="ml-auto w-0 h-0 border-y-[4px] border-l-[4px] border-y-transparent border-l-black" />;

const WebMenu = () => (
  <>
    <div className="absolute left-[426px] top-[42px] w-[169px] h-[72px] bg-[#f0f0f0] border border-[#a0a0a0] shadow-[2px_2px_3px_rgba(0,0,0,0.35)] p-[2px] text-[11.5px] tracking-[-0.2px] text-[#111]">
      <div className="h-[22px] flex items-center pl-[31px] pr-[8px] bg-[#91c9f7]">
        <span>Lizmap</span><MenuArrow />
      </div>
      <div className="h-[22px] flex items-center pl-[31px] pr-[8px]">
        <span>MetaSearch</span><MenuArrow />
      </div>
      <div className="h-[22px] flex items-center pl-[3px] pr-[8px]">
        <svg width="17" height="15" viewBox="0 0 17 15" className="mr-[11px]">
          <path d="M1 7l7.500 4L16 7v3l-7.500 5L1 10z" fill="#333" />
          <path d="M8.500 1L16 6l-7.500 5L1 6z" fill="#1976c2" />
        </svg>
        <span>OpenLayers plugin</span><MenuArrow />
      </div>
    </div>
    <div className="absolute left-[594px] top-[45px] w-[115px] h-[72px] bg-[#f0f0f0] border border-[#a0a0a0] shadow-[2px_2px_3px_rgba(0,0,0,0.35)] p-[2px] text-[11.5px] tracking-[-0.2px] text-[#111]">
      <div className="h-[22px] flex items-center pl-[3px] bg-[#91c9f7]">
        <svg width="17" height="17" viewBox="0 0 17 17" className="mr-[11px]"><circle cx="8.500" cy="8.500" r="7.500" fill="#8ec85a" stroke="#5c9c3e" /><path d="M4 8c0-3 3-5 6-5-1 2-4 2-3 5z" fill="#2b7a35" /></svg>
        <span>lizmap</span>
      </div>
      {["Help…", "About…"].map((t) => (
        <div key={t} className="h-[22px] flex items-center pl-[3px]">
          <svg width="17" height="17" viewBox="0 0 17 17" className="mr-[11px]"><circle cx="8.500" cy="8.500" r="7" fill="#8fb3dc" stroke="#c7d8ea" strokeWidth="1.500" /><text x="8.500" y="12" textAnchor="middle" fontSize="9" fontWeight="700" fill="#fff">?</text></svg>
          <span>{t}</span>
        </div>
      ))}
    </div>
  </>
);

const RedArrow = () => (
  <svg width="200" height="52" viewBox="0 0 200 52" className="absolute left-[702px] top-[33px]">
    <path d="M0 25L100 0V11H197V40H100V50z" fill="#ed1c24" />
  </svg>
);

export default function App() {
  return (
    <div className="w-[1366px] h-[768px] overflow-hidden relative flex flex-col bg-[#f0f0f0] font-[Roboto,sans-serif]">
      <Title />
      <MenuBar />
      <Row1 />
      <Row2 />
      <Row3 />
      <div className="flex-1 flex min-h-0 mt-px">
        <LeftBar />
        <Panel />
        <div className="flex-1 bg-white border border-[#8c8c8c]">
          <RiverMap />
        </div>
      </div>
      <StatusBar />
      <div className="h-[2px] bg-[#1a1a1a] shrink-0" />
      <WebMenu />
      <RedArrow />
    </div>
  );
}
